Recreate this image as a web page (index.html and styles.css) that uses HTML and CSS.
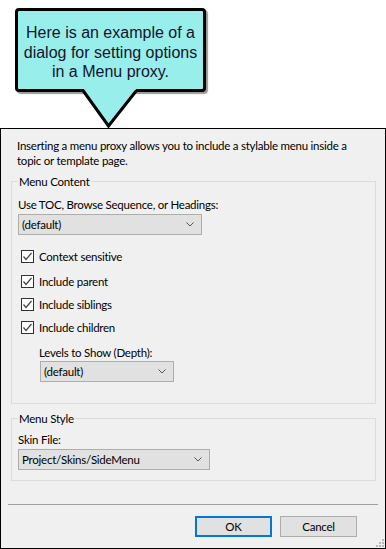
FILE: index.html
```html
<!DOCTYPE html>
<html lang="en">
<head>
    <meta charset="UTF-8">
    <title>Menu Proxy</title>
    <link rel="stylesheet" href="styles.css">
</head>
<body>

<div class="callout">
    <div class="callout-box">Here is an example of a<br>dialog for setting options<br>in a Menu proxy.</div>
    <svg class="callout-tail" width="64" height="42" viewBox="0 0 64 42">
        <polygon points="6,0 58,0 58,4.5 30.5,40.5 6,4.5" fill="#98eeea"/>
        <polyline points="5,4.5 30.5,40 58.5,4.5" fill="none" stroke="#000" stroke-width="3"/>
    </svg>
</div>

<div class="dialog">
    <p class="intro">Inserting a menu proxy allows you to include a stylable menu inside a<br>topic or template page.</p>

    <fieldset class="group group-content">
        <legend>Menu Content</legend>
        <div class="field-label">Use TOC, Browse Sequence, or Headings:</div>
        <div class="select select-toc"><span>(default)</span>
            <svg width="8" height="5" viewBox="0 0 8 5"><polyline points="0.5,0.5 4,4 7.5,0.5" fill="none" stroke="#555" stroke-width="1"/></svg>
        </div>

        <div class="checks">
            <label class="check first"><span class="box"><svg width="11" height="11" viewBox="0 0 11 11"><polyline points="1.5,5.5 4,8.5 9.5,2" fill="none" stroke="#444" stroke-width="1.2"/></svg></span>Context sensitive</label>
            <label class="check"><span class="box"><svg width="11" height="11" viewBox="0 0 11 11"><polyline points="1.5,5.5 4,8.5 9.5,2" fill="none" stroke="#444" stroke-width="1.2"/></svg></span>Include parent</label>
            <label class="check"><span class="box"><svg width="11" height="11" viewBox="0 0 11 11"><polyline points="1.5,5.5 4,8.5 9.5,2" fill="none" stroke="#444" stroke-width="1.2"/></svg></span>Include siblings</label>
            <label class="check"><span class="box"><svg width="11" height="11" viewBox="0 0 11 11"><polyline points="1.5,5.5 4,8.5 9.5,2" fill="none" stroke="#444" stroke-width="1.2"/></svg></span>Include children</label>
        </div>

        <div class="depth">
            <div class="field-label">Levels to Show (Depth):</div>
            <div class="select select-depth"><span>(default)</span>
                <svg width="8" height="5" viewBox="0 0 8 5"><polyline points="0.5,0.5 4,4 7.5,0.5" fill="none" stroke="#555" stroke-width="1"/></svg>
            </div>
        </div>
    </fieldset>

    <fieldset class="group group-style">
        <legend>Menu Style</legend>
        <div class="field-label">Skin File:</div>
        <div class="select select-skin"><span>Project/Skins/SideMenu</span>
            <svg width="8" height="5" viewBox="0 0 8 5"><polyline points="0.5,0.5 4,4 7.5,0.5" fill="none" stroke="#555" stroke-width="1"/></svg>
        </div>
    </fieldset>

    <hr class="separator">

    <div class="buttons">
        <button class="btn btn-default">OK</button>
        <button class="btn">Cancel</button>
    </div>

    <svg class="grip" width="8" height="8" viewBox="0 0 8 8" fill="#b8b8b8">
        <rect x="6" y="0" width="2" height="2"/>
        <rect x="3" y="3" width="2" height="2"/>
        <rect x="6" y="3" width="2" height="2"/>
        <rect x="0" y="6" width="2" height="2"/>
        <rect x="3" y="6" width="2" height="2"/>
        <rect x="6" y="6" width="2" height="2"/>
    </svg>
</div>

</body>
</html>
```

FILE: styles.css
```css
body {
    margin: 0;
    padding: 0;
    background-color: #ffffff;
}

/* callout above the dialog */

.callout {
    position: relative;
    height: 128px;
    padding: 8px 0 0 15px;
    box-sizing: border-box;
}

.callout-box {
    width: 191px;
    height: 84px;
    box-sizing: border-box;
    padding-top: 12px;

    border: 3px solid #000;
    border-radius: 4px;
    background-color: #98eeea;
    box-shadow: 2px 2px 1px rgba(0, 0, 0, .4);

    font-family: "Liberation Sans", Arial, sans-serif;
    font-size: 16px;
    line-height: 19.5px;
    color: #14142e;
    text-align: center;
    white-space: nowrap;
}

.callout-tail {
    position: absolute;
    left: 78px;
    top: 86px;
}

/* dialog */

.dialog {
    position: relative;
    height: 421px;
    box-sizing: border-box;
    border: 1px solid #000;
    background-color: #f0f0f0;

    font-family: Lato, "Noto Sans", sans-serif;
    font-size: 11.5px;
    letter-spacing: -0.24px;
    line-height: 15px;
    color: #000;
}

.intro {
    margin: 0;
    padding: 9px 16px 0;
    white-space: nowrap;
}

.group {
    margin: 6px 9px 0 10px;
    padding: 8px 6px 21px;
    min-width: 0;
    border: 1px solid #dcdcdc;
}

.group legend {
    padding: 0 1px;
}

.group-style {
    margin-top: 7px;
    padding-top: 6px;
    padding-bottom: 10px;
}

.field-label {
    white-space: nowrap;
}

.select {
    display: flex;
    align-items: center;
    height: 21px;
    box-sizing: border-box;
    margin-top: 2px;
    padding: 0 7px 0 3px;

    border: 1px solid #adadad;
    background-color: #e1e1e1;
}

.select svg {
    margin-left: auto;
}

.select-toc {
    width: 184px;
}

.select-depth {
    width: 134px;
    margin-left: 1px;
    margin-top: 1px;
}

.select-skin {
    width: 192px;
}

.checks {
    display: flex;
    flex-direction: column;
    gap: 6px;
    margin-top: 13px;
}

.check {
    display: flex;
    align-items: center;
    height: 17px;
    padding-left: 3px;
}

.check.first {
    margin-bottom: 2px;
}

.check .box {
    display: flex;
    align-items: center;
    justify-content: center;
    width: 13px;
    height: 13px;
    box-sizing: border-box;
    margin-right: 5px;

    border: 1px solid #333;
    background-color: #fff;
}

.depth {
    margin: 9px 0 0 21px;
}

.separator {
    margin: 23px 7px 0;
    border: 0;
    height: 1px;
    background-color: #a0a0a0;
}

.buttons {
    display: flex;
    justify-content: flex-end;
    gap: 8px;
    margin-top: 11px;
    padding-right: 28px;
}

.btn {
    width: 77px;
    height: 21px;
    box-sizing: border-box;
    padding: 0;

    border: 1px solid #adadad;
    background-color: #e1e1e1;

    font-family: inherit;
    font-size: 11.5px;
    letter-spacing: inherit;
    color: #000;
}

.btn-default {
    border: 2px solid #0078d7;
}

.grip {
    position: absolute;
    right: 1px;
    bottom: 1px;
}
```
